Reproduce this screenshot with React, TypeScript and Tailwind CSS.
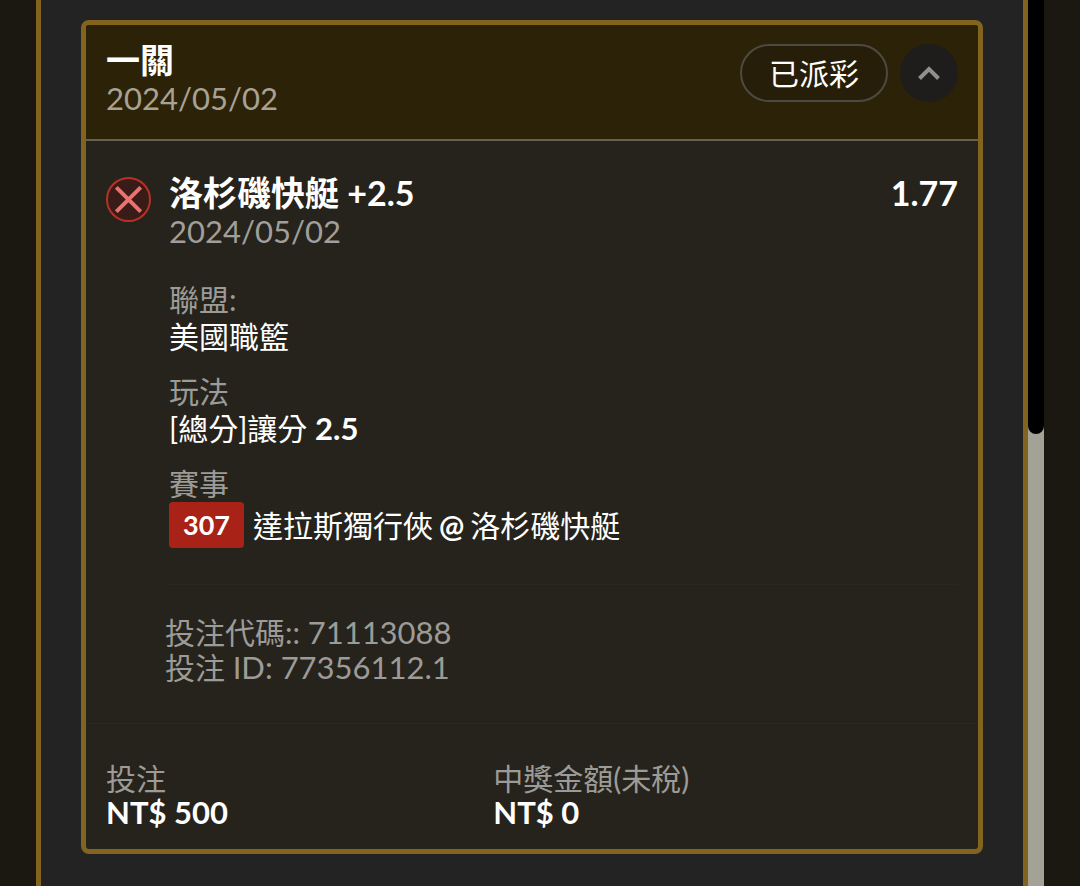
import React, { useState } from "react"

const details = [
  { label: "聯盟:", value: "美國職籃" },
  { label: "玩法", value: "[總分]讓分", line: "2.5" },
]

const LostIcon = () => (
  <svg viewBox="0 0 45 45" className="size-[45px] shrink-0 mt-[3px]" fill="none" role="img" aria-label="未中獎">
    <circle cx="22.5" cy="22.5" r="21.5" fill="#391b17" stroke="#b43229" strokeWidth="2" />
    <path d="M10.3 10.3 34.7 34.7M34.7 10.3 10.3 34.7" stroke="#ed706c" strokeWidth="4" />
  </svg>
)

const Chevron = ({ open }: { open: boolean }) => (
  <svg viewBox="0 0 24 16" className={open ? "w-6 h-4" : "w-6 h-4 rotate-180"} fill="none">
    <path d="M2.5 13.5 12 4 21.5 13.5" stroke="#8f8f8f" strokeWidth="4" />
  </svg>
)

export default function App() {
  const [open, setOpen] = useState(true)

  return (
    <div className="flex min-h-screen bg-[#1b1711] px-9 font-['Lato','Noto_Sans_CJK_TC',sans-serif] text-[30px] text-white">
      <main className="flex-1 border-x-5 border-[#83641f] bg-[#232323] px-10 pt-5 pb-8">
        <article className="overflow-hidden rounded-lg border-5 border-[#83641f] bg-[#26231c]">
          <header className="flex items-start justify-between border-b-2 border-[#67624f] bg-[#2b2208] px-5 pt-4 pb-[22px]">
            <div>
              <h1 className="text-[34px] leading-[38px] font-bold">一關</h1>
              <p className="text-[31px] leading-[38px] text-[#a8a294]">2024/05/02</p>
            </div>
            <div className="mt-[3px] flex gap-3">
              <span className="flex h-[58px] items-center rounded-full border-2 border-[#4e4a41] bg-[#261e08] px-[27px]">
                已派彩
              </span>
              <button
                type="button"
                aria-label="展開"
                aria-expanded={open}
                onClick={() => setOpen(!open)}
                className="flex size-[58px] items-center justify-center rounded-full bg-[#1e1d1c]"
              >
                <Chevron open={open} />
              </button>
            </div>
          </header>

          {open && (
            <section className="flex gap-[18px] px-5 pt-[33px]">
              <LostIcon />
              <div className="flex-1">
                <div className="flex justify-between text-[34px] leading-[38px] font-bold">
                  <h2>洛杉磯快艇 +2.5</h2>
                  <span>1.77</span>
                </div>
                <p className="text-[31px] leading-[38px] text-[#a09f9c]">2024/05/02</p>

                <dl className="mt-[31px] space-y-[18px] border-b border-[#2b2822] pb-9 leading-[37px]">
                  {details.map((item) => (
                    <div key={item.label}>
                      <dt className="text-[#9c9b98]">{item.label}</dt>
                      <dd>
                        {item.value} {item.line && <span className="text-[31px] font-bold">{item.line}</span>}
                      </dd>
                    </div>
                  ))}
                  <div>
                    <dt className="text-[#9c9b98]">賽事</dt>
                    <dd className="flex items-center gap-[9px]">
                      <span className="rounded-sm bg-[#a92217] px-[14px] text-[27px] leading-[46px] font-bold">307</span>
                      <span className="flex gap-[6px]">
                        <span>達拉斯獨行俠</span>
                        <span className="font-bold">@</span>
                        <span>洛杉磯快艇</span>
                      </span>
                    </dd>
                  </div>
                </dl>
              </div>
            </section>
          )}

          {open && (
            <div className="border-b border-[#2b2822] pt-[30px] pr-5 pb-[38px] pl-[79px] leading-[35px] text-[#9c9b98]">
              <p>
                投注代碼:: <span className="text-[31px]">71113088</span>
              </p>
              <p>
                投注 <span className="text-[31px]">ID: 77356112.1</span>
              </p>
            </div>
          )}

          <footer className="grid grid-cols-[5fr_6fr] px-5 pt-[37px] pb-5 leading-[34px]">
            <div>
              <p className="text-[#9c9b98]">投注</p>
              <p className="text-[31px] font-bold">NT$ 500</p>
            </div>
            <div>
              <p className="text-[#9c9b98]">中獎金額(未稅)</p>
              <p className="text-[31px] font-bold">NT$ 0</p>
            </div>
          </footer>
        </article>
      </main>

      {/* scroll track */}
      <div className="flex w-4 bg-[#a3a297]">
        <div className="h-[49vh] w-4 rounded-b-full bg-black" />
      </div>
    </div>
  )
}
